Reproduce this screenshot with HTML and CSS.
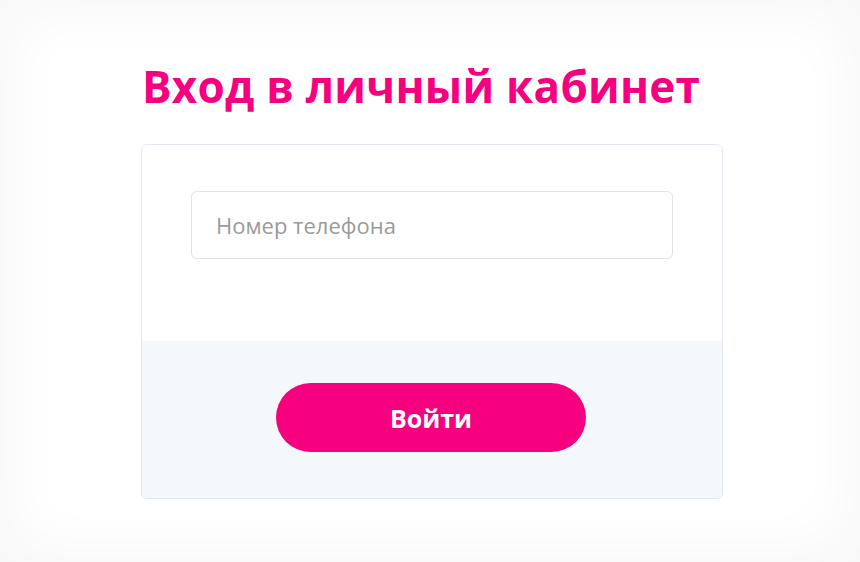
FILE: index.html
```html
<!DOCTYPE html>
<html lang="ru">
<head>
<meta charset="utf-8">
<link rel="stylesheet" href="styles.css">
</head>
<body>
<div class="page">
  <div class="wrap">
    <h1 class="title">Вход в личный кабинет</h1>
    <div class="card">
      <div class="card-top">
        <div class="input">Номер телефона</div>
      </div>
      <div class="card-bottom">
        <div class="btn">Войти</div>
      </div>
    </div>
  </div>
</div>
</body>
</html>
```
FILE: styles.css
```css
html, body {
  margin: 0;
  padding: 0;
  width: 860px;
  height: 562px;
  background: #f6f6f6;
  font-family: "Open Sans", "Liberation Sans", sans-serif;
  overflow: hidden;
}
.page {
  width: 860px;
  height: 562px;
  box-sizing: border-box;
  background: #fff;
  box-shadow: inset 0 0 60px 10px rgba(0,0,0,0.035);
  padding-top: 56px;
  padding-left: 141px;
}
.wrap {
  width: 582px;
}
.title {
  margin: 0 0 0 1px;
  color: #f7007f;
  font-weight: 700;
  font-size: 44px;
  line-height: 60px;
  letter-spacing: 0.25px;
}
.card {
  margin-top: 28px;
  border: 1px solid #e3e9ef;
  border-radius: 6px;
  overflow: hidden;
}
.card-top {
  background: #fff;
  padding: 46px 49px 82px;
}
.input {
  height: 66px;
  border: 1px solid #e2e2e2;
  border-radius: 6px;
  padding-left: 24px;
  display: flex;
  align-items: center;
  font-size: 22px;
  color: #9a9a9a;
}
.card-bottom {
  background: #f5f8fb;
  padding: 42px 0 46px;
  display: flex;
  justify-content: center;
}
.btn {
  width: 310px;
  height: 69px;
  border-radius: 35px;
  background: #f7007f;
  color: #fff;
  font-weight: 700;
  font-size: 25px;
  display: flex;
  align-items: center;
  justify-content: center;
  margin-left: -2px;
}
```
